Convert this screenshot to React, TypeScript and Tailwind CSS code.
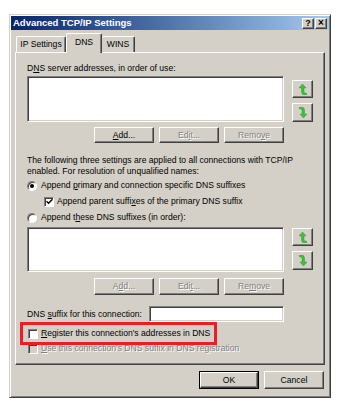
import type { ReactNode } from "react";

const raised =
  "border border-t-white border-l-white border-r-[#404040] border-b-[#404040] shadow-[inset_-1px_-1px_#808080]";
const sunken =
  "border border-t-[#808080] border-l-[#808080] border-r-white border-b-white shadow-[inset_1px_1px_#404040,inset_-1px_-1px_#d4d0c8] bg-white";
const greyText = "text-[#808080] [text-shadow:1px_1px_0_#fff]";

const U = ({ children }: { children: ReactNode }) => <span className="underline underline-offset-[1px]">{children}</span>;

const Btn = ({ children, disabled, w = "w-[60px]", h = "h-[16px]" }: { children: ReactNode; disabled?: boolean; w?: string; h?: string }) => (
  <div className={`${raised} ${w} ${h} flex items-center justify-center ${disabled ? greyText : "text-black"}`}>
    {children}
  </div>
);

const UpArrow = () => (
  <svg width="8" height="11" viewBox="0 0 8 11">
    <path d="M3.5 0 L7 4 L5 4 L5 7.5 Q5 9 6.5 9 L7.5 9 L7.5 11 L6 11 Q2.5 11 2.5 8 L2.5 4 L0 4 Z" fill="#3fbf3f" stroke="#1f8f1f" strokeWidth="0.4" />
  </svg>
);

const DownArrow = () => (
  <svg width="8" height="11" viewBox="0 0 8 11">
    <path d="M4.5 11 L8 7 L5.5 7 L5.5 3 Q5.5 0 2 0 L0.5 0 L0.5 2 L1.5 2 Q3 2 3 3.5 L3 7 L1 7 Z" fill="#3fbf3f" stroke="#1f8f1f" strokeWidth="0.4" />
  </svg>
);

const ArrowButtons = ({ pt }: { pt: string }) => (
  <div className={`ml-[8px] flex flex-col gap-[5px] ${pt}`}>
    <div className={`${raised} w-[21px] h-[18px] flex items-center justify-center`}>
      <UpArrow />
    </div>
    <div className={`${raised} w-[21px] h-[19px] flex items-center justify-center`}>
      <DownArrow />
    </div>
  </div>
);

const Check = ({ checked, disabled }: { checked?: boolean; disabled?: boolean }) => (
  <div
    className={`w-[10px] h-[10px] border border-t-[#808080] border-l-[#808080] border-r-white border-b-white shadow-[inset_1px_1px_#404040] flex items-center justify-center ${
      disabled ? "bg-[#d4d0c8]" : "bg-white"
    }`}
  >
    {checked && (
      <svg width="7" height="7" viewBox="0 0 7 7">
        <path d="M0.5 3.2 L2.5 5.2 L6.5 1.2" fill="none" stroke="#000" strokeWidth="1.5" />
      </svg>
    )}
  </div>
);

const Radio = ({ checked }: { checked?: boolean }) => (
  <div className="w-[10px] h-[10px] rounded-full bg-white border border-t-[#808080] border-l-[#808080] border-r-white border-b-white shadow-[inset_1px_1px_#404040] flex items-center justify-center">
    {checked && <div className="w-[4px] h-[4px] rounded-full bg-black" />}
  </div>
);

export default function App() {
  return (
    <div
      className="w-[339px] h-[413px] bg-white pt-[14px] pl-[9px] text-[8.6px] leading-[11px] text-black"
      style={{ fontFamily: "'Liberation Sans', Arial, sans-serif" }}
    >
      <div className="w-[322px] h-[384px] bg-[#d4d0c8] border border-t-[#d4d0c8] border-l-[#d4d0c8] border-r-[#404040] border-b-[#404040] shadow-[inset_1px_1px_#fff,inset_-1px_-1px_#808080] p-[1px]">
        {/* title bar */}
        <div className="h-[14px] flex items-center justify-between bg-gradient-to-r from-[#0a246a] to-[#a6caf0] pl-[2px] pr-[2px]">
          <span className="text-white font-bold text-[9.5px] leading-[12px]">Advanced TCP/IP Settings</span>
          <div className="flex gap-[1px]">
            <div className={`${raised} bg-[#d4d0c8] w-[12px] h-[11px] flex items-center justify-center font-bold text-[9px] leading-none`}>?</div>
            <div className={`${raised} bg-[#d4d0c8] w-[12px] h-[11px] flex items-center justify-center font-bold text-[10px] leading-none`}>×</div>
          </div>
        </div>

        <div className="px-[4px]">
          {/* tabs */}
          <div className="h-[22px] flex items-end">
            <div className="ml-[1px] w-[50px] h-[16px] flex items-center justify-center border border-b-0 border-t-white border-l-white border-r-[#404040] rounded-t-[2px] shadow-[inset_-1px_0_#808080]">
              IP Settings
            </div>
            <div className="relative z-10 -mb-[1px] w-[36px] h-[20px] pb-[3px] flex items-center justify-center bg-[#d4d0c8] border border-b-0 border-t-white border-l-white border-r-[#404040] rounded-t-[2px] shadow-[inset_-1px_0_#808080]">
              DNS
            </div>
            <div className="w-[33px] h-[16px] flex items-center justify-center border border-b-0 border-l-0 border-t-white border-r-[#404040] rounded-t-[2px] shadow-[inset_-1px_0_#808080]">
              WINS
            </div>
          </div>

          {/* tab panel */}
          <div className="w-[310px] h-[313px] border border-t-white border-l-white border-r-[#404040] border-b-[#404040] shadow-[inset_-1px_-1px_#808080] pl-[11px] flex flex-col">
            <div className="mt-[10px] h-[11px]">
              D<U>N</U>S server addresses, in order of use:
            </div>
            <div className="mt-[2px] flex">
              <div className={`${sunken} w-[257px] h-[46px]`} />
              <ArrowButtons pt="pt-[4px]" />
            </div>
            <div className="mt-[5px] w-[257px] flex justify-end gap-[5px]">
              <Btn>
                <U>A</U>dd...
              </Btn>
              <Btn disabled>
                Ed<U>i</U>t...
              </Btn>
              <Btn disabled>
                Remo<U>v</U>e
              </Btn>
            </div>
            <div className="mt-[12px]">
              The following three settings are applied to all connections with TCP/IP
              <br />
              enabled. For resolution of unqualified names:
            </div>
            <div className="mt-[2px] h-[13px] flex items-center gap-[4px]">
              <Radio checked />
              <span>
                Append <U>p</U>rimary and connection specific DNS suffixes
              </span>
            </div>
            <div className="mt-[3px] h-[13px] flex items-center gap-[3px] pl-[17px]">
              <Check checked />
              <span>
                Append parent suffi<U>x</U>es of the primary DNS suffix
              </span>
            </div>
            <div className="mt-[3px] h-[13px] flex items-center gap-[4px]">
              <Radio />
              <span>
                Append t<U>h</U>ese DNS suffixes (in order):
              </span>
            </div>
            <div className="mt-[3px] flex">
              <div className={`${sunken} w-[257px] h-[45px]`} />
              <ArrowButtons pt="pt-[1px]" />
            </div>
            <div className="mt-[6px] w-[257px] flex justify-end gap-[5px]">
              <Btn disabled h="h-[17px]">
                A<U>d</U>d...
              </Btn>
              <Btn disabled h="h-[17px]">
                Edi<U>t</U>...
              </Btn>
              <Btn disabled h="h-[17px]">
                Re<U>m</U>ove
              </Btn>
            </div>
            <div className="mt-[11px] flex items-center">
              <span className="w-[122px]">
                DNS <U>s</U>uffix for this connection:
              </span>
              <div className={`${sunken} w-[135px] h-[16px]`} />
            </div>
            <div className="relative mt-[5px] h-[13px] flex items-center gap-[3px] pl-[1px]">
              <div className="absolute -left-[7px] -top-[5px] w-[197px] h-[23px] border-[3px] border-[#ee1c24]" />
              <Check />
              <span>
                <U>R</U>egister this connection's addresses in DNS
              </span>
            </div>
            <div className="mt-[2px] h-[13px] flex items-center gap-[3px] pl-[1px]">
              <Check disabled />
              <span className={greyText}>
                <U>U</U>se this connection's DNS suffix in DNS registration
              </span>
            </div>
          </div>

          {/* footer */}
          <div className="mt-[6px] flex justify-end gap-[5px] pr-[1px]">
            <div className="border border-black">
              <Btn w="w-[58px]" h="h-[16px]">
                OK
              </Btn>
            </div>
            <Btn h="h-[18px]">Cancel</Btn>
          </div>
        </div>
      </div>
    </div>
  );
}
